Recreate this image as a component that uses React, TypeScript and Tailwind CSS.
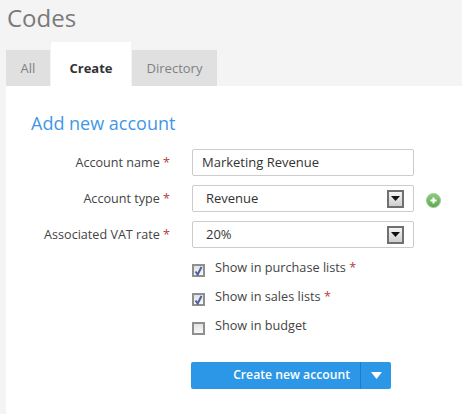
import React from 'react';

const Star = () => <span className="text-[#b5403a]">*</span>;

const SelectArrow = () => (
  <div className="w-[17px] h-[18px] border-2 border-[#707070] bg-gradient-to-b from-[#f4f4f4] to-[#cfcfcf] flex items-center justify-center">
    <svg width="9" height="5" viewBox="0 0 9 5">
      <path d="M0 0h9L4.5 5z" fill="#111" />
    </svg>
  </div>
);

const Row: React.FC<{ label: string; children: React.ReactNode }> = ({ label, children }) => (
  <div className="flex items-center h-[27px] mb-[9px]">
    <div className="w-[164px] text-right text-[12.6px] text-[#444] whitespace-nowrap pt-px">
      {label} <Star />
    </div>
    <div className="ml-[22px] w-[222px] h-[27px]">{children}</div>
    {label === 'Account type' && (
      <svg className="ml-[12px] mt-[3px]" width="15" height="15" viewBox="0 0 15 15">
        <defs>
          <linearGradient id="addFill" x1="0" y1="0" x2="0" y2="1">
            <stop offset="0" stopColor="#8ccb7c" />
            <stop offset="1" stopColor="#5ea84f" />
          </linearGradient>
        </defs>
        <circle cx="7.5" cy="7.5" r="7" fill="url(#addFill)" stroke="#9ccb92" />
        <path d="M7.5 4.4v6.2M4.4 7.5h6.2" stroke="#fff" strokeWidth="2" />
      </svg>
    )}
  </div>
);

const SelectBox: React.FC<{ value: string }> = ({ value }) => (
  <div className="h-full border border-[#ccc] rounded-[2px] flex items-center justify-between pl-[13px] pr-[9px] text-[13px] text-[#333]">
    <span>{value}</span>
    <SelectArrow />
  </div>
);

const Check: React.FC<{ label: string; checked?: boolean; required?: boolean }> = ({ label, checked, required }) => (
  <div className="flex items-center h-[29px]">
    <div className="w-[13px] h-[13px] border-2 border-[#8f8f8f] bg-gradient-to-b from-[#e2e2e2] to-[#f8f8f8] flex items-center justify-center mt-[2px]">
      {checked && (
        <svg width="9" height="10" viewBox="0 0 9 10">
          <path d="M1.5 5.5L3.7 8.5L7.5 1" fill="none" stroke="#4a5fa5" strokeWidth="2" />
        </svg>
      )}
    </div>
    <span className="ml-[10px] mb-[3px] text-[12.7px] text-[#444]">
      {label} {required && <Star />}
    </span>
  </div>
);

export default function App() {
  return (
    <div className="w-[462px] h-[414px] overflow-hidden bg-[#f4f4f4] font-['Open_Sans',sans-serif] pl-[6px]">
      <h1 className="h-[42px] pt-[3px] pl-px text-[24px] leading-[30px] text-[#7a7a7a]">Codes</h1>
      <div className="flex items-end h-[44px] text-[13px]">
        <div className="w-[44px] h-[36px] pt-px bg-[#e0e0e0] text-[#808080] flex items-center justify-center">All</div>
        <div className="ml-px w-[80px] h-[44px] bg-white text-[#333] font-bold flex items-center justify-center pt-[9px]">Create</div>
        <div className="ml-px w-[85px] h-[36px] pt-px bg-[#e0e0e0] text-[#808080] flex items-center justify-center">Directory</div>
      </div>
      <div className="bg-white h-[328px]">
        <h2 className="pl-[25px] pt-[25px] h-[63px] text-[18px] leading-[24px] text-[#3f97e6]">Add new account</h2>
        <Row label="Account name">
          <div className="h-full border border-[#ccc] rounded-[2px] flex items-center pl-[9px] text-[13px] text-[#333]">Marketing Revenue</div>
        </Row>
        <Row label="Account type">
          <SelectBox value="Revenue" />
        </Row>
        <Row label="Associated VAT rate">
          <SelectBox value="20%" />
        </Row>
        <div className="ml-[186px] -mt-[2px]">
          <Check label="Show in purchase lists" checked required />
          <Check label="Show in sales lists" checked required />
          <Check label="Show in budget" />
        </div>
        <div className="ml-[185px] mt-[20px] w-[200px] h-[27px] rounded-[2px] bg-[#2b97e6] flex text-white text-[12.2px] font-semibold">
          <div className="w-[170px] border-r border-[#1a7fc4] flex items-center justify-end pr-[10px]">Create new account</div>
          <div className="flex-1 flex items-center justify-center">
            <svg width="11" height="7" viewBox="0 0 11 7">
              <path d="M0 0h11L5.5 7z" fill="#fff" />
            </svg>
          </div>
        </div>
      </div>
    </div>
  );
}
